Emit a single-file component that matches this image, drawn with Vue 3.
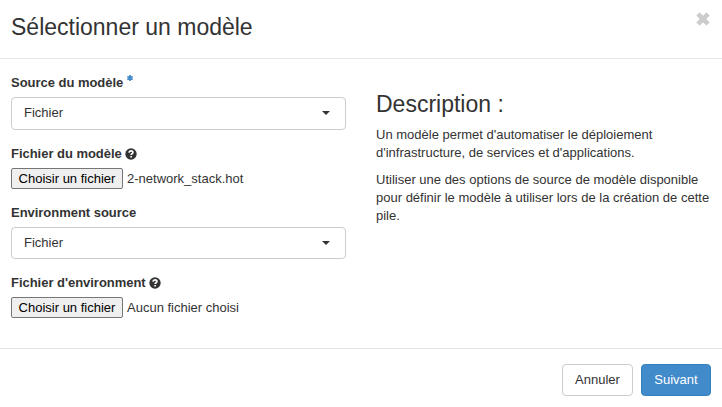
<script setup>
const fields = [
  { label: 'Source du modèle', type: 'select', value: 'Fichier', required: true, key: 'source' },
  { label: 'Fichier du modèle', type: 'file', value: '2-network_stack.hot', help: true, key: 'file' },
  { label: 'Environment source', type: 'select', value: 'Fichier', key: 'env-source' },
  { label: "Fichier d'environment", type: 'file', value: 'Aucun fichier choisi', help: true, key: 'env-file' },
]
</script>

<template>
  <div class="modal">
    <header class="modal-header">
      <h3 class="title">Sélectionner un modèle</h3>
      <button class="close" type="button" aria-label="Fermer">
        <svg width="14" height="14" viewBox="0 0 14 14"><path d="M3.6.8 7 4.2 10.4.8 13.2 3.6 9.8 7 13.2 10.4 10.4 13.2 7 9.8 3.6 13.2.8 10.4 4.2 7 .8 3.6Z" /></svg>
      </button>
    </header>
    <main class="modal-body">
      <form class="fields">
        <div v-for="f in fields" :key="f.key" class="field" :class="[f.type, f.key]">
          <div class="label">
            <span>{{ f.label }}</span>
            <svg v-if="f.required" class="star" width="6" height="6" viewBox="0 0 6 6">
              <path d="M3 0V6M.3 1.4 5.7 4.6M5.7 1.4.3 4.6" />
            </svg>
            <svg v-if="f.help" class="help" width="12" height="12" viewBox="0 0 12 12">
              <circle cx="6" cy="6" r="5.7" />
              <path d="M4 4.6C4.2 2.4 7.9 2.4 7.9 4.4 7.9 5.8 6.1 5.6 6.1 7" />
              <path d="M6.1 7.9V9.6" />
            </svg>
          </div>
          <div v-if="f.type === 'select'" class="select-box">
            <span>{{ f.value }}</span>
            <svg class="caret" width="8" height="4" viewBox="0 0 8 4"><path d="M0 0H8L4 4Z" /></svg>
          </div>
          <div v-else class="file-row">
            <button class="file-btn" type="button">Choisir un fichier</button>
            <span>{{ f.value }}</span>
          </div>
        </div>
      </form>
      <section class="description">
        <h3 class="title">Description :</h3>
        <p>Un modèle permet d'automatiser le déploiement<br>d'infrastructure, de services et d'applications.</p>
        <p>Utiliser une des options de source de modèle disponible<br>pour définir le modèle à utiliser lors de la création de cette<br>pile.</p>
      </section>
    </main>
    <footer class="modal-footer">
      <button class="btn" type="button">Annuler</button>
      <button class="btn primary" type="button">Suivant</button>
    </footer>
  </div>
</template>

<style>
body { margin: 0; background: #fff; overflow: hidden; }
</style>

<style scoped>
.modal {
  box-sizing: border-box;
  width: 722px;
  height: 407px;
  display: flex;
  flex-direction: column;
  font: 13px/18px "Liberation Sans", Arial, sans-serif;
  color: #333;
  background: #fff;
}
.modal * { box-sizing: border-box; }
button { font: inherit; margin: 0; }
.title {
  margin: 0;
  font-size: 23px;
  line-height: 26px;
  font-weight: 400;
  white-space: nowrap;
}
.modal-header {
  height: 59px;
  flex: none;
  display: flex;
  justify-content: space-between;
  align-items: flex-start;
  padding: 14px 11px 0;
  border-bottom: 1px solid #e5e5e5;
}
.close { display: flex; padding: 0; border: 0; background: none; margin: -2px 1px 0 0; }
.close path { fill: #ccc; stroke: #ccc; stroke-width: 0.8; stroke-linejoin: round; }
.modal-body { display: flex; height: 289px; flex: none; padding: 15px 11px 0; gap: 30px; }
.fields { width: 335px; flex: none; }
.label {
  display: flex;
  height: 18px;
  margin-bottom: 5px;
  font-weight: 700;
  letter-spacing: -0.03px;
  white-space: nowrap;
}
.select { height: 71px; }
.file { height: 59px; }
.env-source { height: 70px; }
.star { margin: 1px 0 0 4px; }
.star path { stroke: #428bca; stroke-width: 1.7; }
.help { margin: 3px 0 0 3px; }
.help circle { fill: #333; }
.help path { fill: none; stroke: #fff; stroke-width: 1.7; }
.select-box {
  height: 33px;
  display: flex;
  align-items: center;
  justify-content: space-between;
  padding: 0 15px 2px 12px;
  border: 1px solid #ccc;
  border-radius: 4px;
}
.env-source .select-box { height: 32px; padding-bottom: 1px; }
.caret { fill: #333; }
.file-row { display: flex; gap: 4px; height: 21px; line-height: 21px; white-space: nowrap; }
.file-btn {
  width: 112px;
  height: 21px;
  padding: 0;
  line-height: 19px;
  color: #000;
  background: #efefef;
  border: 1px solid #767676;
  border-radius: 2px;
}
.description { padding-top: 17px; white-space: nowrap; }
.description .title { margin-bottom: 9px; }
.description p { margin: 0 0 9px; }
.modal-footer {
  flex: 1;
  display: flex;
  justify-content: flex-end;
  gap: 8px;
  padding: 15px 11px 0;
  border-top: 1px solid #e5e5e5;
}
.btn {
  width: 71px;
  height: 32px;
  padding: 0 0 1px;
  color: #333;
  background: #fff;
  border: 1px solid #ccc;
  border-radius: 4px;
}
.btn.primary { width: 70px; color: #fff; background: #428bca; border-color: #357ebd; }
</style>
